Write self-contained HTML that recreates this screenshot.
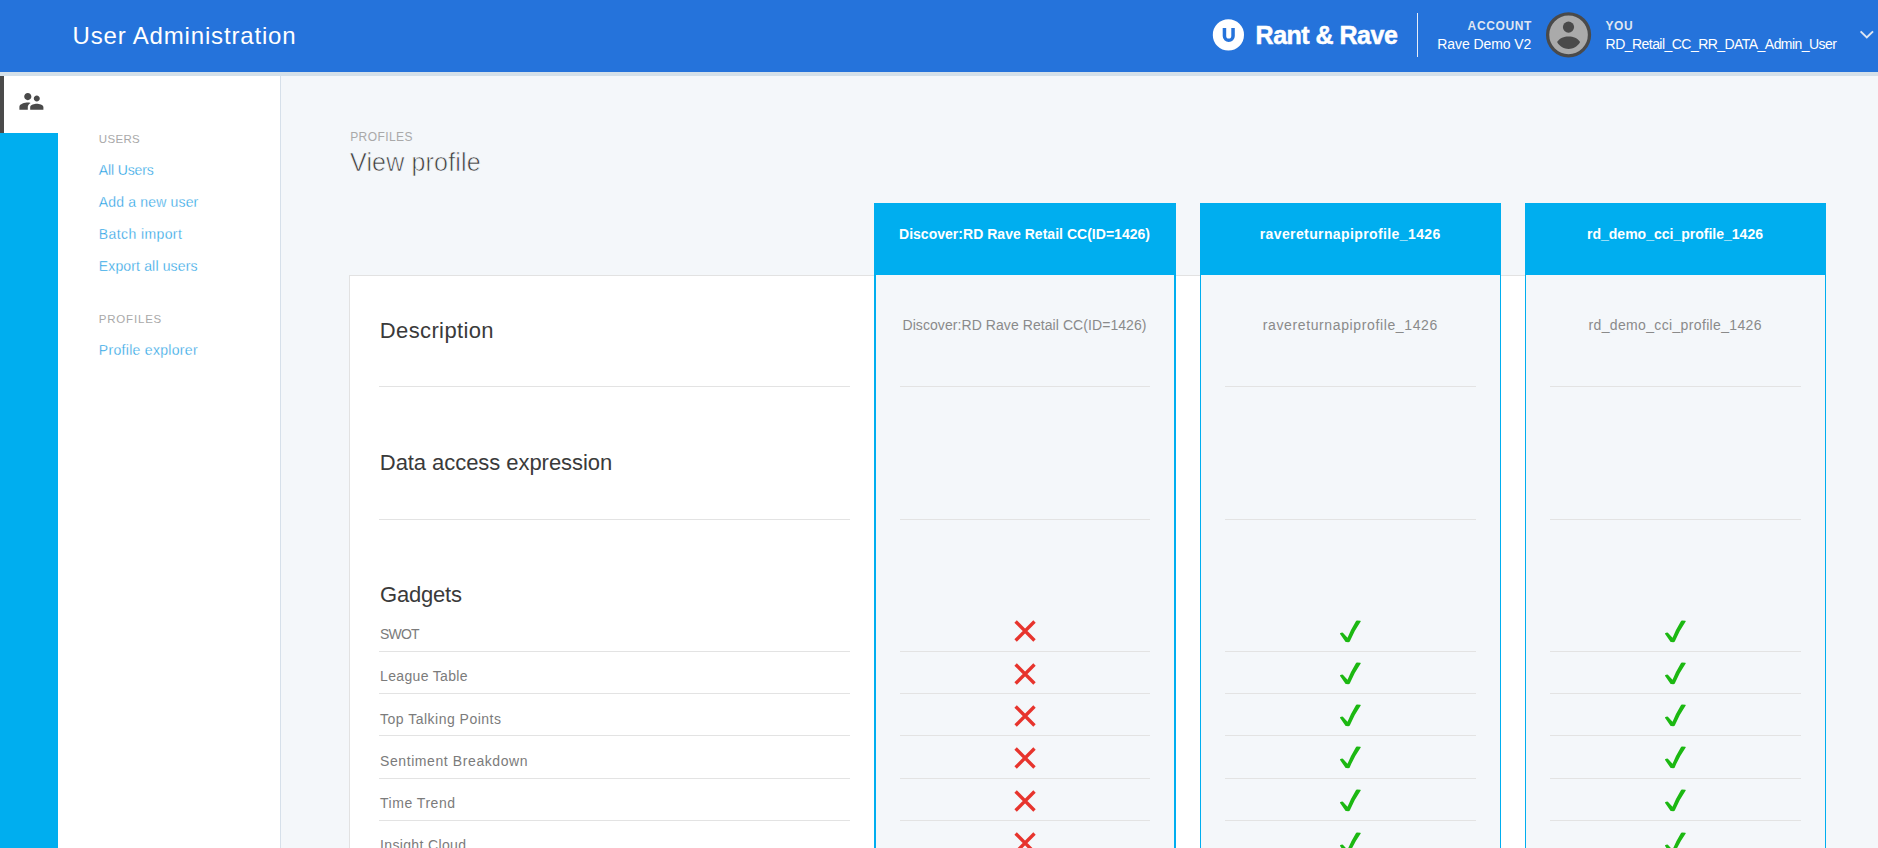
<!DOCTYPE html>
<html><head><meta charset="utf-8"><title>User Administration</title>
<style>
html,body{margin:0;padding:0}
body{width:1878px;height:848px;overflow:hidden;background:#f4f7fa;position:relative;font-family:"Liberation Sans",sans-serif}
.b{position:absolute;display:block}
.t{position:absolute;white-space:nowrap;line-height:1;font-family:"Liberation Sans",sans-serif}
</style></head><body>
<div class="b" style="left:0;top:0;width:1878px;height:72px;background:#2573db"></div>
<div class="b" style="left:0;top:72px;width:1878px;height:4px;background:#d4e0e9"></div>
<div class="b" style="left:0;top:76px;width:280px;height:772px;background:#fff"></div>
<div class="b" style="left:280px;top:76px;width:1px;height:772px;background:#d6e0ea"></div>
<div class="b" style="left:0;top:76px;width:4px;height:57px;background:#4a4a4a"></div>
<div class="b" style="left:0;top:133px;width:58px;height:715px;background:#00aeef"></div>
<svg class="b" style="left:16.6px;top:87px" width="28.8" height="28.8" viewBox="0 0 24 24"><path fill="#4a4a4a" d="M16.5 12c1.38 0 2.49-1.12 2.49-2.5S17.88 7 16.5 7C15.12 7 14 8.12 14 9.5s1.12 2.5 2.5 2.5zM9 11c1.66 0 2.99-1.34 2.99-3S10.66 5 9 5C7.34 5 6 6.34 6 8s1.34 3 3 3zm7.5 3c-1.83 0-5.5.92-5.5 2.75V19h11v-2.25c0-1.83-3.67-2.75-5.5-2.75zM9 13c-2.33 0-7 1.17-7 3.5V19h7v-2.25c0-.85.33-2.34 2.37-3.47C10.5 13.1 9.66 13 9 13z"/></svg>
<svg class="b" style="left:1212px;top:18px" width="34" height="34" viewBox="0 0 34 34"><circle cx="16.4" cy="16.9" r="15.6" fill="#fff"/><path d="M12.45 9.9 V17.9 a4.3 4.3 0 0 0 8.6 0 V9.9" fill="none" stroke="#2573db" stroke-width="3.5" stroke-linecap="butt"/></svg>
<div class="b" style="left:1417px;top:13px;width:1px;height:44px;background:#e6edf9"></div>
<svg class="b" style="left:1545px;top:11px" width="48" height="48" viewBox="0 0 48 48"><circle cx="23.55" cy="23.85" r="20.95" fill="#aaaaaa" stroke="#4a4a4a" stroke-width="3.3"/><circle cx="23.5" cy="16.1" r="5.6" fill="#4a4a4a"/><path fill="#4a4a4a" d="M12.1 31.1 C14.5 27.3 19 25.6 23.6 25.6 C28.2 25.6 32.7 27.3 35.1 31.1 C32.5 35.8 28 38 23.6 38 C19.2 38 14.7 35.8 12.1 31.1 Z"/></svg>
<svg class="b" style="left:1856px;top:26px" width="22" height="18" viewBox="0 0 22 18"><path d="M4.6 5.4 L10.8 11.4 L17 5.4" fill="none" stroke="#dfe6f2" stroke-width="2"/></svg>
<div class="b" style="left:349px;top:275px;width:1477px;height:573px;background:#fff;border-left:1px solid #e2e2e2;border-top:1px solid #e2e2e2;box-sizing:border-box"></div>
<div class="b" style="left:379px;top:386px;width:471px;height:1px;background:#e3e3e3"></div>
<div class="b" style="left:379px;top:519px;width:471px;height:1px;background:#e3e3e3"></div>
<div class="b" style="left:379px;top:651px;width:471px;height:1px;background:#e3e3e3"></div>
<div class="b" style="left:379px;top:693px;width:471px;height:1px;background:#e3e3e3"></div>
<div class="b" style="left:379px;top:735px;width:471px;height:1px;background:#e3e3e3"></div>
<div class="b" style="left:379px;top:778px;width:471px;height:1px;background:#e3e3e3"></div>
<div class="b" style="left:379px;top:820px;width:471px;height:1px;background:#e3e3e3"></div>
<div class="b" style="left:874px;top:203px;width:302px;height:72px;background:#00aeef"></div>
<div class="b" style="left:874px;top:275px;width:302px;height:573px;background:#f4f7fa;border-left:2px solid #00aeef;border-right:2px solid #00aeef;box-sizing:border-box"></div>
<div class="b" style="left:900px;top:386px;width:250px;height:1px;background:#e3e3e3"></div>
<div class="b" style="left:900px;top:519px;width:250px;height:1px;background:#e3e3e3"></div>
<div class="b" style="left:900px;top:651px;width:250px;height:1px;background:#e3e3e3"></div>
<div class="b" style="left:900px;top:693px;width:250px;height:1px;background:#e3e3e3"></div>
<div class="b" style="left:900px;top:735px;width:250px;height:1px;background:#e3e3e3"></div>
<div class="b" style="left:900px;top:778px;width:250px;height:1px;background:#e3e3e3"></div>
<div class="b" style="left:900px;top:820px;width:250px;height:1px;background:#e3e3e3"></div>
<svg class="b" style="left:1013.0px;top:619.4px" width="24" height="24" viewBox="0 0 24 24"><path d="M2.6 2.5 L21.5 21.5 M21.5 2.5 L2.6 21.5" fill="none" stroke="#e7342d" stroke-width="3.4"/></svg>
<svg class="b" style="left:1013.0px;top:661.6px" width="24" height="24" viewBox="0 0 24 24"><path d="M2.6 2.5 L21.5 21.5 M21.5 2.5 L2.6 21.5" fill="none" stroke="#e7342d" stroke-width="3.4"/></svg>
<svg class="b" style="left:1013.0px;top:703.6px" width="24" height="24" viewBox="0 0 24 24"><path d="M2.6 2.5 L21.5 21.5 M21.5 2.5 L2.6 21.5" fill="none" stroke="#e7342d" stroke-width="3.4"/></svg>
<svg class="b" style="left:1013.0px;top:745.8px" width="24" height="24" viewBox="0 0 24 24"><path d="M2.6 2.5 L21.5 21.5 M21.5 2.5 L2.6 21.5" fill="none" stroke="#e7342d" stroke-width="3.4"/></svg>
<svg class="b" style="left:1013.0px;top:788.5px" width="24" height="24" viewBox="0 0 24 24"><path d="M2.6 2.5 L21.5 21.5 M21.5 2.5 L2.6 21.5" fill="none" stroke="#e7342d" stroke-width="3.4"/></svg>
<svg class="b" style="left:1013.0px;top:830.9px" width="24" height="24" viewBox="0 0 24 24"><path d="M2.6 2.5 L21.5 21.5 M21.5 2.5 L2.6 21.5" fill="none" stroke="#e7342d" stroke-width="3.4"/></svg>
<div class="b" style="left:1200px;top:203px;width:301px;height:72px;background:#00aeef"></div>
<div class="b" style="left:1200px;top:275px;width:301px;height:573px;background:#f4f7fa;border-left:1px solid #00aeef;border-right:1px solid #00aeef;box-sizing:border-box"></div>
<div class="b" style="left:1225px;top:386px;width:251px;height:1px;background:#e3e3e3"></div>
<div class="b" style="left:1225px;top:519px;width:251px;height:1px;background:#e3e3e3"></div>
<div class="b" style="left:1225px;top:651px;width:251px;height:1px;background:#e3e3e3"></div>
<div class="b" style="left:1225px;top:693px;width:251px;height:1px;background:#e3e3e3"></div>
<div class="b" style="left:1225px;top:735px;width:251px;height:1px;background:#e3e3e3"></div>
<div class="b" style="left:1225px;top:778px;width:251px;height:1px;background:#e3e3e3"></div>
<div class="b" style="left:1225px;top:820px;width:251px;height:1px;background:#e3e3e3"></div>
<svg class="b" style="left:1339.0px;top:619.0px" width="24" height="26" viewBox="0 0 24 26"><path fill="#1cb812" d="M0.98 14.5 Q1 13.6 3.1 13.4 Q3.6 13.4 3.9 13.7 L8.53 18.83 Q11.8 10.6 16.9 2.3 Q17.2 1.5 18.15 1.55 L21.3 1.65 Q21.9 1.9 21.7 2.4 Q14.8 12.3 10.79 22.42 Q10.3 23.3 9.1 23.25 L7.2 23.1 Q6.6 23 6.3 22.5 L1.1 15.1 Z"/></svg>
<svg class="b" style="left:1339.0px;top:661.2px" width="24" height="26" viewBox="0 0 24 26"><path fill="#1cb812" d="M0.98 14.5 Q1 13.6 3.1 13.4 Q3.6 13.4 3.9 13.7 L8.53 18.83 Q11.8 10.6 16.9 2.3 Q17.2 1.5 18.15 1.55 L21.3 1.65 Q21.9 1.9 21.7 2.4 Q14.8 12.3 10.79 22.42 Q10.3 23.3 9.1 23.25 L7.2 23.1 Q6.6 23 6.3 22.5 L1.1 15.1 Z"/></svg>
<svg class="b" style="left:1339.0px;top:703.2px" width="24" height="26" viewBox="0 0 24 26"><path fill="#1cb812" d="M0.98 14.5 Q1 13.6 3.1 13.4 Q3.6 13.4 3.9 13.7 L8.53 18.83 Q11.8 10.6 16.9 2.3 Q17.2 1.5 18.15 1.55 L21.3 1.65 Q21.9 1.9 21.7 2.4 Q14.8 12.3 10.79 22.42 Q10.3 23.3 9.1 23.25 L7.2 23.1 Q6.6 23 6.3 22.5 L1.1 15.1 Z"/></svg>
<svg class="b" style="left:1339.0px;top:745.4px" width="24" height="26" viewBox="0 0 24 26"><path fill="#1cb812" d="M0.98 14.5 Q1 13.6 3.1 13.4 Q3.6 13.4 3.9 13.7 L8.53 18.83 Q11.8 10.6 16.9 2.3 Q17.2 1.5 18.15 1.55 L21.3 1.65 Q21.9 1.9 21.7 2.4 Q14.8 12.3 10.79 22.42 Q10.3 23.3 9.1 23.25 L7.2 23.1 Q6.6 23 6.3 22.5 L1.1 15.1 Z"/></svg>
<svg class="b" style="left:1339.0px;top:788.1px" width="24" height="26" viewBox="0 0 24 26"><path fill="#1cb812" d="M0.98 14.5 Q1 13.6 3.1 13.4 Q3.6 13.4 3.9 13.7 L8.53 18.83 Q11.8 10.6 16.9 2.3 Q17.2 1.5 18.15 1.55 L21.3 1.65 Q21.9 1.9 21.7 2.4 Q14.8 12.3 10.79 22.42 Q10.3 23.3 9.1 23.25 L7.2 23.1 Q6.6 23 6.3 22.5 L1.1 15.1 Z"/></svg>
<svg class="b" style="left:1339.0px;top:830.5px" width="24" height="26" viewBox="0 0 24 26"><path fill="#1cb812" d="M0.98 14.5 Q1 13.6 3.1 13.4 Q3.6 13.4 3.9 13.7 L8.53 18.83 Q11.8 10.6 16.9 2.3 Q17.2 1.5 18.15 1.55 L21.3 1.65 Q21.9 1.9 21.7 2.4 Q14.8 12.3 10.79 22.42 Q10.3 23.3 9.1 23.25 L7.2 23.1 Q6.6 23 6.3 22.5 L1.1 15.1 Z"/></svg>
<div class="b" style="left:1525px;top:203px;width:301px;height:72px;background:#00aeef"></div>
<div class="b" style="left:1525px;top:275px;width:301px;height:573px;background:#f4f7fa;border-left:1px solid #00aeef;border-right:1px solid #00aeef;box-sizing:border-box"></div>
<div class="b" style="left:1550px;top:386px;width:251px;height:1px;background:#e3e3e3"></div>
<div class="b" style="left:1550px;top:519px;width:251px;height:1px;background:#e3e3e3"></div>
<div class="b" style="left:1550px;top:651px;width:251px;height:1px;background:#e3e3e3"></div>
<div class="b" style="left:1550px;top:693px;width:251px;height:1px;background:#e3e3e3"></div>
<div class="b" style="left:1550px;top:735px;width:251px;height:1px;background:#e3e3e3"></div>
<div class="b" style="left:1550px;top:778px;width:251px;height:1px;background:#e3e3e3"></div>
<div class="b" style="left:1550px;top:820px;width:251px;height:1px;background:#e3e3e3"></div>
<svg class="b" style="left:1664.0px;top:619.0px" width="24" height="26" viewBox="0 0 24 26"><path fill="#1cb812" d="M0.98 14.5 Q1 13.6 3.1 13.4 Q3.6 13.4 3.9 13.7 L8.53 18.83 Q11.8 10.6 16.9 2.3 Q17.2 1.5 18.15 1.55 L21.3 1.65 Q21.9 1.9 21.7 2.4 Q14.8 12.3 10.79 22.42 Q10.3 23.3 9.1 23.25 L7.2 23.1 Q6.6 23 6.3 22.5 L1.1 15.1 Z"/></svg>
<svg class="b" style="left:1664.0px;top:661.2px" width="24" height="26" viewBox="0 0 24 26"><path fill="#1cb812" d="M0.98 14.5 Q1 13.6 3.1 13.4 Q3.6 13.4 3.9 13.7 L8.53 18.83 Q11.8 10.6 16.9 2.3 Q17.2 1.5 18.15 1.55 L21.3 1.65 Q21.9 1.9 21.7 2.4 Q14.8 12.3 10.79 22.42 Q10.3 23.3 9.1 23.25 L7.2 23.1 Q6.6 23 6.3 22.5 L1.1 15.1 Z"/></svg>
<svg class="b" style="left:1664.0px;top:703.2px" width="24" height="26" viewBox="0 0 24 26"><path fill="#1cb812" d="M0.98 14.5 Q1 13.6 3.1 13.4 Q3.6 13.4 3.9 13.7 L8.53 18.83 Q11.8 10.6 16.9 2.3 Q17.2 1.5 18.15 1.55 L21.3 1.65 Q21.9 1.9 21.7 2.4 Q14.8 12.3 10.79 22.42 Q10.3 23.3 9.1 23.25 L7.2 23.1 Q6.6 23 6.3 22.5 L1.1 15.1 Z"/></svg>
<svg class="b" style="left:1664.0px;top:745.4px" width="24" height="26" viewBox="0 0 24 26"><path fill="#1cb812" d="M0.98 14.5 Q1 13.6 3.1 13.4 Q3.6 13.4 3.9 13.7 L8.53 18.83 Q11.8 10.6 16.9 2.3 Q17.2 1.5 18.15 1.55 L21.3 1.65 Q21.9 1.9 21.7 2.4 Q14.8 12.3 10.79 22.42 Q10.3 23.3 9.1 23.25 L7.2 23.1 Q6.6 23 6.3 22.5 L1.1 15.1 Z"/></svg>
<svg class="b" style="left:1664.0px;top:788.1px" width="24" height="26" viewBox="0 0 24 26"><path fill="#1cb812" d="M0.98 14.5 Q1 13.6 3.1 13.4 Q3.6 13.4 3.9 13.7 L8.53 18.83 Q11.8 10.6 16.9 2.3 Q17.2 1.5 18.15 1.55 L21.3 1.65 Q21.9 1.9 21.7 2.4 Q14.8 12.3 10.79 22.42 Q10.3 23.3 9.1 23.25 L7.2 23.1 Q6.6 23 6.3 22.5 L1.1 15.1 Z"/></svg>
<svg class="b" style="left:1664.0px;top:830.5px" width="24" height="26" viewBox="0 0 24 26"><path fill="#1cb812" d="M0.98 14.5 Q1 13.6 3.1 13.4 Q3.6 13.4 3.9 13.7 L8.53 18.83 Q11.8 10.6 16.9 2.3 Q17.2 1.5 18.15 1.55 L21.3 1.65 Q21.9 1.9 21.7 2.4 Q14.8 12.3 10.79 22.42 Q10.3 23.3 9.1 23.25 L7.2 23.1 Q6.6 23 6.3 22.5 L1.1 15.1 Z"/></svg>
<div class="t" style="top:24.18px;font-size:24px;color:#ffffff;letter-spacing:0.829px;left:72.60px;">User Administration</div>
<div class="t" style="top:23.04px;font-size:25px;color:#ffffff;font-weight:700;letter-spacing:-0.507px;-webkit-text-stroke:0.5px #ffffff;left:1255.60px;">Rant &amp; Rave</div>
<div class="t" style="top:19.54px;font-size:12px;color:#dfe6f2;font-weight:700;letter-spacing:0.633px;right:345.97px;">ACCOUNT</div>
<div class="t" style="top:37.25px;font-size:14px;color:#ffffff;letter-spacing:-0.067px;right:346.67px;">Rave Demo V2</div>
<div class="t" style="top:19.54px;font-size:12px;color:#dfe6f2;font-weight:700;letter-spacing:0.692px;left:1605.40px;">YOU</div>
<div class="t" style="top:37.25px;font-size:14px;color:#ffffff;letter-spacing:-0.543px;left:1605.60px;">RD_Retail_CC_RR_DATA_Admin_User</div>
<div class="t" style="top:134.07px;font-size:11.5px;color:#a9a9a9;letter-spacing:0.344px;left:98.80px;">USERS</div>
<div class="t" style="top:162.85px;font-size:14px;color:#189ce3;letter-spacing:-0.127px;-webkit-text-stroke:0.3px #ffffff;left:98.80px;">All Users</div>
<div class="t" style="top:194.65px;font-size:14px;color:#189ce3;letter-spacing:0.169px;-webkit-text-stroke:0.3px #ffffff;left:98.80px;">Add a new user</div>
<div class="t" style="top:226.75px;font-size:14px;color:#189ce3;letter-spacing:0.401px;-webkit-text-stroke:0.3px #ffffff;left:98.80px;">Batch import</div>
<div class="t" style="top:258.95px;font-size:14px;color:#189ce3;letter-spacing:0.148px;-webkit-text-stroke:0.3px #ffffff;left:98.80px;">Export all users</div>
<div class="t" style="top:314.47px;font-size:11.5px;color:#a9a9a9;letter-spacing:0.801px;left:98.80px;">PROFILES</div>
<div class="t" style="top:343.35px;font-size:14px;color:#189ce3;letter-spacing:0.310px;-webkit-text-stroke:0.3px #ffffff;left:98.80px;">Profile explorer</div>
<div class="t" style="top:130.74px;font-size:12px;color:#a9a9a9;letter-spacing:0.406px;left:350.20px;">PROFILES</div>
<div class="t" style="top:149.74px;font-size:25px;color:#3c3c3c;letter-spacing:0.165px;-webkit-text-stroke:0.65px #f4f7fa;left:350.00px;">View profile</div>
<div class="t" style="top:319.78px;font-size:22px;color:#3a3a3a;letter-spacing:0.375px;left:379.80px;">Description</div>
<div class="t" style="top:452.38px;font-size:22px;color:#3a3a3a;letter-spacing:-0.055px;left:379.80px;">Data access expression</div>
<div class="t" style="top:583.98px;font-size:22px;color:#3a3a3a;letter-spacing:-0.195px;left:380.00px;">Gadgets</div>
<div class="t" style="top:627.15px;font-size:14px;color:#7b7b7b;letter-spacing:-0.800px;left:380.00px;">SWOT</div>
<div class="t" style="top:669.05px;font-size:14px;color:#7b7b7b;letter-spacing:0.343px;left:380.00px;">League Table</div>
<div class="t" style="top:711.55px;font-size:14px;color:#7b7b7b;letter-spacing:0.494px;left:380.00px;">Top Talking Points</div>
<div class="t" style="top:753.85px;font-size:14px;color:#7b7b7b;letter-spacing:0.591px;left:380.00px;">Sentiment Breakdown</div>
<div class="t" style="top:795.95px;font-size:14px;color:#7b7b7b;letter-spacing:0.524px;left:380.00px;">Time Trend</div>
<div class="t" style="top:838.15px;font-size:14px;color:#7b7b7b;letter-spacing:0.357px;left:380.00px;">Insight Cloud</div>
<div class="t" style="top:227.45px;font-size:14px;color:#ffffff;font-weight:700;letter-spacing:0.025px;left:899.00px;">Discover:RD Rave Retail CC(ID=1426)</div>
<div class="t" style="top:318.45px;font-size:14px;color:#8a8a8a;letter-spacing:0.071px;left:902.50px;">Discover:RD Rave Retail CC(ID=1426)</div>
<div class="t" style="top:227.45px;font-size:14px;color:#ffffff;font-weight:700;letter-spacing:0.392px;left:1259.70px;">ravereturnapiprofile_1426</div>
<div class="t" style="top:318.45px;font-size:14px;color:#8a8a8a;letter-spacing:0.627px;left:1262.70px;">ravereturnapiprofile_1426</div>
<div class="t" style="top:227.45px;font-size:14px;color:#ffffff;font-weight:700;letter-spacing:0.005px;left:1587.00px;">rd_demo_cci_profile_1426</div>
<div class="t" style="top:318.45px;font-size:14px;color:#8a8a8a;letter-spacing:0.348px;left:1588.50px;">rd_demo_cci_profile_1426</div>
</body></html>
